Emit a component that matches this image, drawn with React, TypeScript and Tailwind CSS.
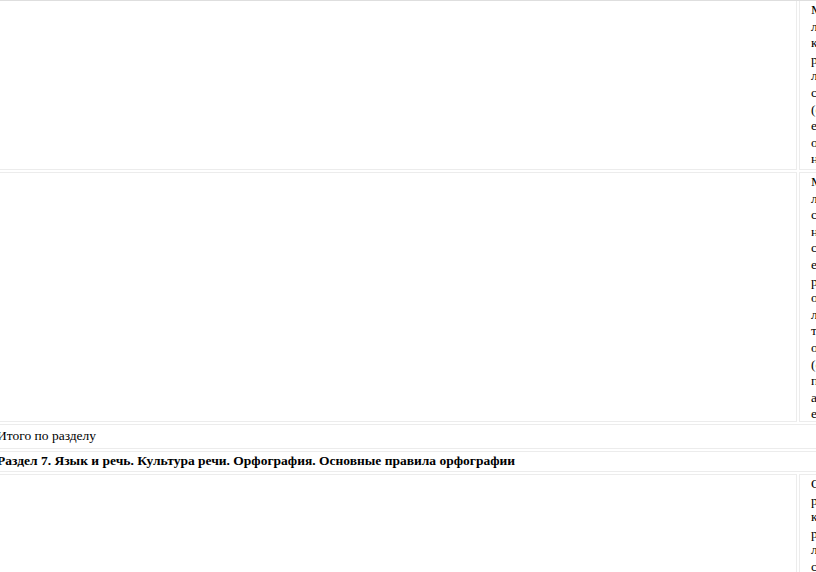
const ROW1 = ["Многоуровневые", "лексические", "конструкции", "разного", "лексического", "состава", "(синонимы,", "единицы", "образного", "назначения)"];
const ROW2 = ["Методы", "лексической", "стилистики", "научного", "стиля,", "единицы", "речи", "официального", "лексикона,", "терминов", "общих", "(специальных)", "понятий,", "а также", "единиц"];
const ROW5 = ["Основные", "разделы", "культуры", "речи,", "лексики,", "стилистики"];

function Lines({ words }: { words: string[] }) {
  return (
    <div className="flex flex-col">
      {words.map((w, i) => (
        <span key={i} className="whitespace-nowrap leading-[16.6px]">
          {w}
        </span>
      ))}
    </div>
  );
}

export default function App() {
  return (
    <div className="w-[816px] h-[572px] overflow-hidden bg-white text-black text-[13.5px] font-['Liberation_Serif',serif]">
      <div className="w-[1000px] -ml-[3px] border-t border-[#dedede] grid grid-cols-[800px_198px] gap-[2px]">
        <div className="h-[169px] border border-t-0 border-[#ececec]" />
        <div className="h-[169px] border border-t-0 border-[#ececec] pl-[11px] pt-[1px]">
          <Lines words={ROW1} />
        </div>

        <div className="h-[250px] border border-[#ececec]" />
        <div className="h-[250px] border border-[#ececec] pl-[11px] pt-[1px]">
          <Lines words={ROW2} />
        </div>

        <div className="col-span-2 h-[25px] border border-[#ececec] flex items-center -ml-[2px] pl-[1px]">
          Итого по разделу
        </div>
        <div className="col-span-2 h-[21px] border border-[#ececec] flex items-center font-bold -ml-[2px] pl-[1px]">
          Раздел 7. Язык и речь. Культура речи. Орфография. Основные правила орфографии
        </div>

        <div className="h-[120px] border border-[#ececec]" />
        <div className="h-[120px] border border-[#ececec] pl-[11px] pt-[1px]">
          <Lines words={ROW5} />
        </div>
      </div>
    </div>
  );
}
